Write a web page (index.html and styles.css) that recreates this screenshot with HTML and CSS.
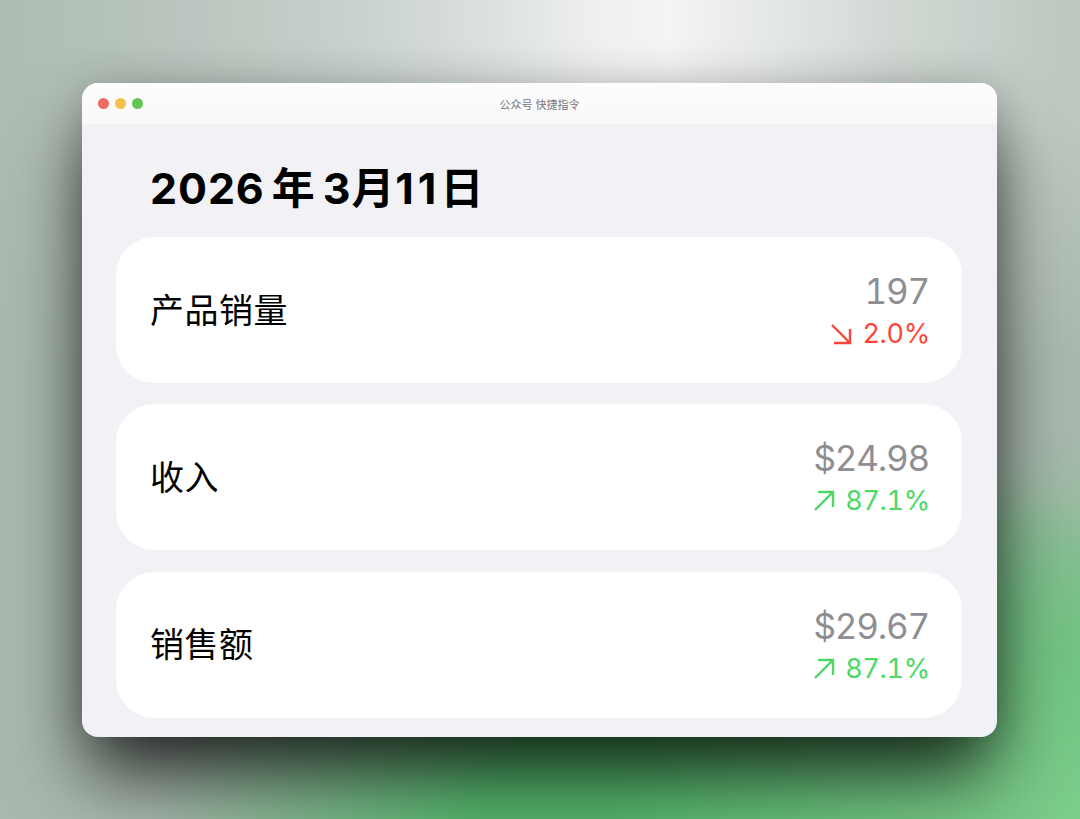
FILE: index.html
```html
<!DOCTYPE html>
<html lang="zh-CN">
<head>
<meta charset="utf-8">
<title>公众号 快捷指令</title>
<link rel="stylesheet" href="styles.css">
</head>
<body>
<div class="desktop">
  <main class="window">
    <header class="titlebar">
      <div class="lights"><i class="light red"></i><i class="light yellow"></i><i class="light green"></i></div>
      <div class="wintitle">公众号 快捷指令</div>
    </header>
    <section class="content">
      <h1 class="date">2026 年 3月<span class="ones">11</span>日</h1>
      <article class="card">
        <div class="label">产品销量</div>
        <div class="stats">
          <div class="value">197</div>
          <div class="delta down">
            <svg class="arrow" viewBox="0 0 22 22"><path d="M2 2 L20 20 M20 6 V20 H4"/></svg>
            <span>2.0%</span>
          </div>
        </div>
      </article>
      <article class="card">
        <div class="label">收入</div>
        <div class="stats">
          <div class="value">$24.98</div>
          <div class="delta up">
            <svg class="arrow" viewBox="0 0 22 22"><path d="M2 20 L20 2 M5 2 H20 V17"/></svg>
            <span>87.1%</span>
          </div>
        </div>
      </article>
      <article class="card">
        <div class="label">销售额</div>
        <div class="stats">
          <div class="value">$29.67</div>
          <div class="delta up">
            <svg class="arrow" viewBox="0 0 22 22"><path d="M2 20 L20 2 M5 2 H20 V17"/></svg>
            <span>87.1%</span>
          </div>
        </div>
      </article>
    </section>
  </main>
</div>
</body>
</html>
```
FILE: styles.css
```css
* { box-sizing: border-box; }
html, body { margin: 0; padding: 0; }
body { width: 1080px; height: 819px; overflow: hidden; font-family: Inter, "Noto Sans CJK SC", sans-serif; }
.desktop {
  width: 1080px;
  height: 819px;
  overflow: hidden;
  padding: 83px 0 0 82px;
  background:
    radial-gradient(ellipse 520px 420px at 1130px 850px, #80cf8e 0%, #74c684 40%, rgba(116,198,132,0) 100%),
    radial-gradient(ellipse 640px 430px at 780px 880px, #55b86d 0%, #55b86d 50%, rgba(90,170,110,0) 100%),
    linear-gradient(180deg, rgba(170,185,175,0) 0%, rgba(170,185,175,0) 15%, #a9b8ae 45%),
    linear-gradient(90deg, #aebcb3 0%, #bac6bf 18%, #cad3ce 34%, #dde2df 46%, #eff1f0 56%, #f3f4f3 62%, #e7eae8 70%, #d2d9d4 82%, #bcc7c0 100%);
}
.window {
  width: 915px;
  height: 654px;
  border-radius: 16px;
  overflow: hidden;
  background: #f2f2f6;
  box-shadow: 0 42px 76px -6px rgba(0, 0, 0, .78), 0 4px 40px rgba(0, 0, 0, .16);
}
.titlebar {
  position: relative;
  height: 41px;
  background: linear-gradient(180deg, #fdfdfd, #f8f8f9);
  display: flex;
  align-items: center;
  justify-content: center;
}
.lights { position: absolute; left: 16px; top: 15px; display: flex; gap: 6px; }
.light { display: block; width: 11px; height: 11px; border-radius: 50%; }
.light.red { background: #ec6a5e; }
.light.yellow { background: #f4bf4f; }
.light.green { background: #62c554; }
.wintitle { font-size: 11px; color: #77777a; }
.content { padding: 0 35px 0 34px; display: flex; flex-direction: column; }
.date {
  margin: 0;
  height: 113px;
  padding: 37px 0 0 34px;
  font-size: 43px;
  line-height: 54px;
  font-weight: 700;
  color: #000;
  white-space: nowrap;
  letter-spacing: .9px;
  word-spacing: -4px;
}
.ones { letter-spacing: 4px; }
.card {
  height: 146px;
  margin-bottom: 21.3px;
  padding: 0 33px 4px 34px;
  background: #fff;
  border-radius: 38px;
  display: flex;
  align-items: center;
  justify-content: space-between;
}
.label { font-size: 34px; letter-spacing: .5px; color: #000; }
.stats { display: flex; flex-direction: column; align-items: flex-end; gap: 6px; padding-top: 4px; }
.value { font-size: 35px; line-height: 42px; color: #8e8e93; font-variant-numeric: tabular-nums; letter-spacing: -1.2px; }
.delta { display: flex; align-items: center; gap: 10px; margin-right: -1px; font-size: 27px; line-height: 32px; letter-spacing: -.3px; font-variant-numeric: tabular-nums; }
.delta.down { color: #ff453a; }
.delta.up { color: #4cd964; }
.arrow { width: 22px; height: 22px; fill: none; stroke: currentColor; stroke-width: 2.4; }
```
